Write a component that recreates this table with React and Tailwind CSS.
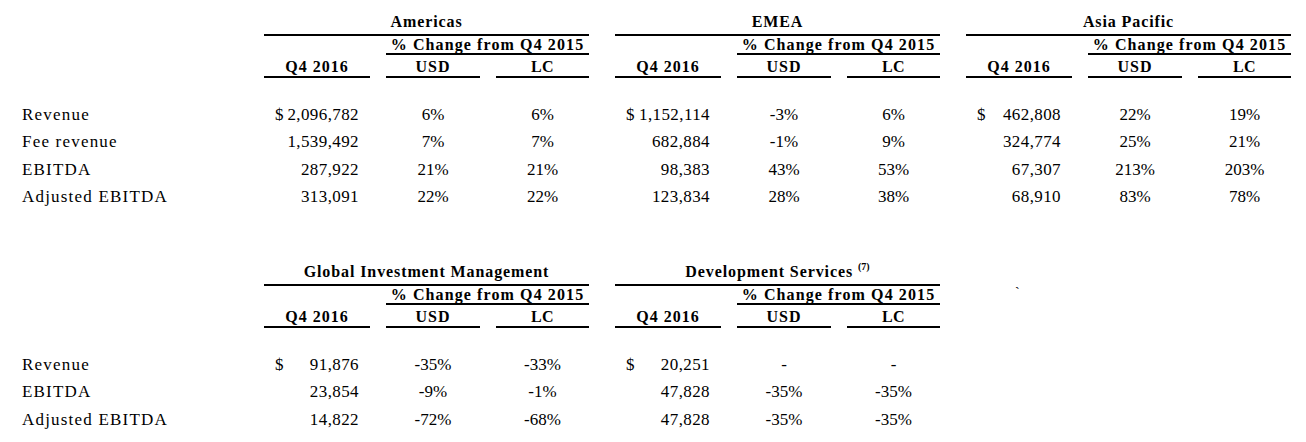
import React from "react";

const top = {
  labels: ["Revenue", "Fee revenue", "EBITDA", "Adjusted EBITDA"],
  blocks: [
    {
      title: "Americas",
      rows: [
        ["$", "2,096,782", "6%", "6%"],
        ["", "1,539,492", "7%", "7%"],
        ["", "287,922", "21%", "21%"],
        ["", "313,091", "22%", "22%"],
      ],
    },
    {
      title: "EMEA",
      rows: [
        ["$", "1,152,114", "-3%", "6%"],
        ["", "682,884", "-1%", "9%"],
        ["", "98,383", "43%", "53%"],
        ["", "123,834", "28%", "38%"],
      ],
    },
    {
      title: "Asia Pacific",
      rows: [
        ["$", "462,808", "22%", "19%"],
        ["", "324,774", "25%", "21%"],
        ["", "67,307", "213%", "203%"],
        ["", "68,910", "83%", "78%"],
      ],
    },
  ],
};

const bottom = {
  labels: ["Revenue", "EBITDA", "Adjusted EBITDA"],
  blocks: [
    {
      title: "Global Investment Management",
      rows: [
        ["$", "91,876", "-35%", "-33%"],
        ["", "23,854", "-9%", "-1%"],
        ["", "14,822", "-72%", "-68%"],
      ],
    },
    {
      title: "Development Services",
      sup: "(7)",
      rows: [
        ["$", "20,251", "-", "-"],
        ["", "47,828", "-35%", "-35%"],
        ["", "47,828", "-35%", "-35%"],
      ],
    },
  ],
};

function Section({ data, tick }) {
  return (
    <div className="h-[250px] flex flex-col">
      {/* title row */}
      <div className="flex h-[36px]">
        <div className="w-[264px] shrink-0" />
        {data.blocks.map((b, i) => (
          <div
            key={i}
            className={`w-[325px] shrink-0 border-b-2 border-black flex items-end justify-center pb-[2px] font-bold text-[16px] leading-[20px] tracking-[0.9px] ${i > 0 ? "ml-[26px]" : ""}`}
          >
            <span>
              {b.title}
              {b.sup && (
                <sup className="text-[10px] tracking-normal ml-[5px] relative top-[-7px]">{b.sup}</sup>
              )}
            </span>
          </div>
        ))}
      </div>
      {/* % change row */}
      <div className="flex h-[19px]">
        <div className="w-[264px] shrink-0" />
        {data.blocks.map((b, i) => (
          <div key={i} className={`w-[325px] shrink-0 flex ${i > 0 ? "ml-[26px]" : ""}`}>
            <div className="w-[106px] shrink-0" />
            <div className="ml-[16px] flex-1 border-b-2 border-black flex items-end justify-center font-bold text-[16px] leading-[16px] tracking-[1.1px]">
              % Change from Q4 2015
            </div>
          </div>
        ))}
        {tick && (
          <div className="ml-[26px] w-[325px] shrink-0 pl-[49px] text-[14px] leading-[14px]">`</div>
        )}
      </div>
      {/* Q4 / USD / LC row */}
      <div className="flex h-[23px]">
        <div className="w-[264px] shrink-0" />
        {data.blocks.map((b, i) => (
          <div
            key={i}
            className={`w-[325px] shrink-0 flex font-bold text-[16px] leading-[18px] ${i > 0 ? "ml-[26px]" : ""}`}
          >
            <div className="w-[106px] shrink-0 border-b-2 border-black flex items-end justify-center tracking-[1px]">Q4 2016</div>
            <div className="ml-[16px] w-[94px] shrink-0 border-b-2 border-black flex items-end justify-center tracking-[1px]">USD</div>
            <div className="ml-[16px] w-[93px] shrink-0 border-b-2 border-black flex items-end justify-center tracking-[0.5px]">LC</div>
          </div>
        ))}
      </div>
      <div className="h-[23.3px]" />
      {data.labels.map((label, r) => (
        <div key={r} className="flex h-[27.33px] items-center text-[17px] leading-[20px]">
          <div className="w-[264px] shrink-0 pl-[22px] tracking-[1.2px]">{label}</div>
          {data.blocks.map((b, i) => {
            const row = b.rows[r];
            return (
              <div key={i} className={`w-[325px] shrink-0 flex ${i > 0 ? "ml-[26px]" : ""}`}>
                <div className="w-[106px] shrink-0 flex justify-between pl-[11px] pr-[11px]">
                  <span>{row[0]}</span>
                  <span className="tracking-[0.4px]">{row[1]}</span>
                </div>
                <div className="ml-[16px] w-[94px] shrink-0 text-center">{row[2]}</div>
                <div className="ml-[16px] w-[93px] shrink-0 text-center">{row[3]}</div>
              </div>
            );
          })}
        </div>
      ))}
    </div>
  );
}

export default function App() {
  return (
    <div className="w-[1306px] h-[442px] bg-white text-black overflow-hidden font-['Liberation_Serif','Times_New_Roman',serif]">
      <Section data={top} />
      <Section data={bottom} tick />
    </div>
  );
}
